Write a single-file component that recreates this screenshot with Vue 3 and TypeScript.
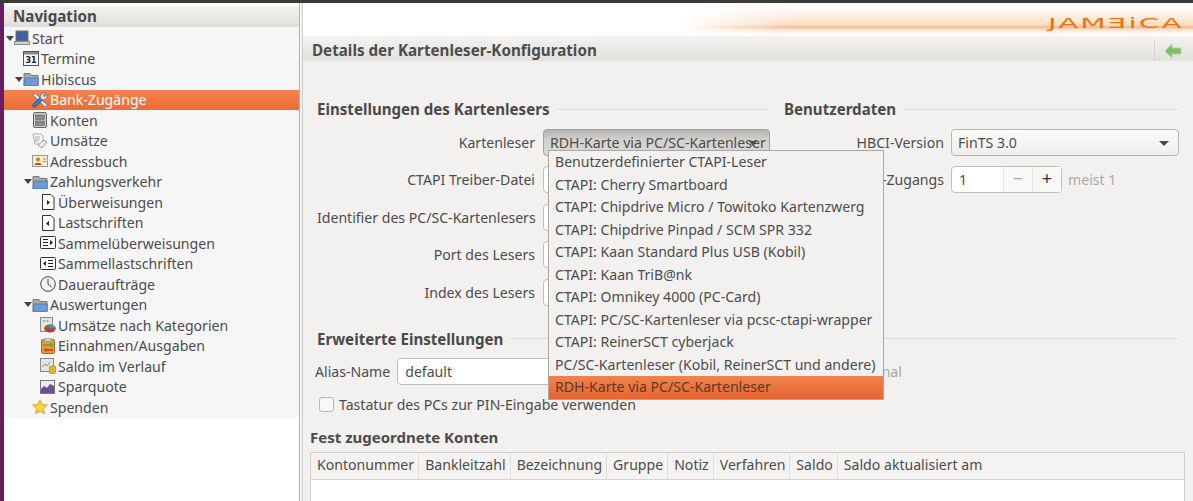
<script setup lang="ts">
interface NavItem { label: string; depth: number; icon: string; arrow?: boolean; selected?: boolean }
const nav: NavItem[] = [
  { label: 'Start', depth: 0, icon: 'monitor', arrow: true },
  { label: 'Termine', depth: 1, icon: 'cal' },
  { label: 'Hibiscus', depth: 1, icon: 'folder', arrow: true },
  { label: 'Bank-Zugänge', depth: 2, icon: 'tools', selected: true },
  { label: 'Konten', depth: 2, icon: 'safe' },
  { label: 'Umsätze', depth: 2, icon: 'docs' },
  { label: 'Adressbuch', depth: 2, icon: 'card' },
  { label: 'Zahlungsverkehr', depth: 2, icon: 'folder', arrow: true },
  { label: 'Überweisungen', depth: 3, icon: 'docR' },
  { label: 'Lastschriften', depth: 3, icon: 'docL' },
  { label: 'Sammelüberweisungen', depth: 3, icon: 'multiR' },
  { label: 'Sammellastschriften', depth: 3, icon: 'multiL' },
  { label: 'Daueraufträge', depth: 3, icon: 'clock' },
  { label: 'Auswertungen', depth: 2, icon: 'folder', arrow: true },
  { label: 'Umsätze nach Kategorien', depth: 3, icon: 'pie' },
  { label: 'Einnahmen/Ausgaben', depth: 3, icon: 'inout' },
  { label: 'Saldo im Verlauf', depth: 3, icon: 'coins' },
  { label: 'Sparquote', depth: 3, icon: 'chart' },
  { label: 'Spenden', depth: 2, icon: 'star' },
]
const popup = [
  'Benutzerdefinierter CTAPI-Leser',
  'CTAPI: Cherry Smartboard',
  'CTAPI: Chipdrive Micro / Towitoko Kartenzwerg',
  'CTAPI: Chipdrive Pinpad / SCM SPR 332',
  'CTAPI: Kaan Standard Plus USB (Kobil)',
  'CTAPI: Kaan TriB@nk',
  'CTAPI: Omnikey 4000 (PC-Card)',
  'CTAPI: PC/SC-Kartenleser via pcsc-ctapi-wrapper',
  'CTAPI: ReinerSCT cyberjack',
  'PC/SC-Kartenleser (Kobil, ReinerSCT und andere)',
  'RDH-Karte via PC/SC-Kartenleser',
]
const leftRows = [
  { label: 'CTAPI Treiber-Datei' },
  { label: 'Identifier des PC/SC-Kartenlesers' },
  { label: 'Port des Lesers' },
  { label: 'Index des Lesers' },
]
const cols = ['Kontonummer', 'Bankleitzahl', 'Bezeichnung', 'Gruppe', 'Notiz', 'Verfahren', 'Saldo', 'Saldo aktualisiert am']
</script>

<template>
  <div class="root">
    <div class="topbar"></div>
    <div class="main">
      <div class="launcher"></div>
      <aside class="side">
        <div class="nav-head">Navigation</div>
        <ul class="tree">
          <li v-for="n in nav" :key="n.label" class="node" :class="[`d${n.depth}`, { sel: n.selected }]">
            <span class="arrow" :class="{ on: n.arrow }"></span>
            <svg class="ico" viewBox="0 0 16 16">
              <template v-if="n.icon === 'monitor'">
                <rect x="2" y="1" width="12" height="10" fill="#4a5a78" stroke="#777"/>
                <rect x="3.500" y="2.500" width="9" height="7" fill="#3c64a8"/>
                <rect x="0.500" y="11.500" width="15" height="3" fill="#d4d4d4" stroke="#888"/>
              </template>
              <template v-else-if="n.icon === 'cal'">
                <rect x="0.500" y="0.500" width="15" height="14" fill="#f4f4f0" stroke="#555"/>
                <rect x="1" y="1" width="14" height="2.500" fill="#888"/>
                <text x="8" y="12" text-anchor="middle" class="cal-t">31</text>
              </template>
              <template v-else-if="n.icon === 'folder'">
                <path d="M1 14V2.500h6l1.500 2H15V14z" fill="#a8a8a8" stroke="#777"/>
                <path d="M0.800 14.500L2.500 7h12.800v7.500z" fill="#6d9bd6" stroke="#4a76ad" stroke-width=".8"/>
              </template>
              <template v-else-if="n.icon === 'tools'">
                <path d="M3 3l10.500 10.500" stroke="#777" stroke-width="3.400" stroke-linecap="round"/>
                <path d="M3 3l10.500 10.500" stroke="#f2f2f2" stroke-width="2" stroke-linecap="round"/>
                <path d="M2.500 13.500l6-6" stroke="#1e4f94" stroke-width="4" stroke-linecap="round"/>
                <path d="M2.500 13.500l6-6" stroke="#3a7ed0" stroke-width="2.600" stroke-linecap="round"/>
                <path d="M8.500 6a3.800 3.800 0 0 1 5-4.800l-2.300 2.300 1.300 1.300 2.300-2.300a3.800 3.800 0 0 1-5 5z" fill="#e2e2e2" stroke="#666" stroke-width=".7"/>
              </template>
              <template v-else-if="n.icon === 'safe'">
                <rect x="1.500" y="0.500" width="13" height="15" rx="1.500" fill="#cfcfcf" stroke="#666"/>
                <rect x="3.500" y="3" width="9" height="4.500" fill="#8a8a8a" stroke="#555" stroke-width=".5"/>
                <rect x="3.500" y="9" width="9" height="4.500" fill="#8a8a8a" stroke="#555" stroke-width=".5"/>
              </template>
              <template v-else-if="n.icon === 'docs'">
                <path d="M1 1h8l2 2v8H3z" fill="#fafafa" stroke="#aaa"/>
                <path d="M3 4h5M3 6h5M3 8h4" stroke="#999" stroke-width=".8"/>
                <path d="M6 12l6-5 3 2-5 6z" fill="#eee" stroke="#999"/>
              </template>
              <template v-else-if="n.icon === 'card'">
                <rect x="0.500" y="2.500" width="15" height="11" fill="#f4efcf" stroke="#999"/>
                <circle cx="6" cy="6.500" r="2" fill="#c97a1c"/>
                <path d="M2.500 12c0-3 7-3 7 0z" fill="#b5561c"/>
                <path d="M11 6h3M11 8.500h3" stroke="#777" stroke-width=".8"/>
              </template>
              <template v-else-if="n.icon === 'docR' || n.icon === 'docL'">
                <path d="M2.500 .5h8.500l3 3v12h-11.500z" fill="#fff" stroke="#333"/>
                <path v-if="n.icon === 'docR'" d="M7 6v5l3-2.500z" fill="#222"/>
                <path v-else d="M9 6v5l-3-2.500z" fill="#222"/>
              </template>
              <template v-else-if="n.icon === 'multiR'">
                <rect x=".5" y="1.500" width="15" height="12" rx="1" fill="#fff" stroke="#333"/>
                <path d="M3 4.500h5M3 7.500h5M3 10.500h5" stroke="#222"/>
                <path d="M10 5v5l3-2.500z" fill="#222"/>
              </template>
              <template v-else-if="n.icon === 'multiL'">
                <rect x=".5" y="1.500" width="15" height="12" rx="1" fill="#fff" stroke="#333"/>
                <path d="M8 4.500h5M8 7.500h5M8 10.500h5" stroke="#222"/>
                <path d="M6 5v5l-3-2.500z" fill="#222"/>
              </template>
              <template v-else-if="n.icon === 'clock'">
                <circle cx="8" cy="8" r="7.300" fill="#f2f2f2" stroke="#444"/>
                <path d="M8 3v5l3.500 3" fill="none" stroke="#444"/>
              </template>
              <template v-else-if="n.icon === 'pie'">
                <rect x=".5" y=".5" width="12" height="14" fill="#e4e4e4" stroke="#888"/>
                <path d="M3 3h2v2h-2zM6.500 3h2v2h-2z" fill="#aaa"/>
                <ellipse cx="10" cy="11.500" rx="5.800" ry="4" fill="#c73a28"/>
                <path d="M10 11.500L10 7.500a5.800 4 0 0 1 5.800 4z" fill="#3f9ac9"/>
                <path d="M4.500 10a5.800 4 0 0 1 5.500-2.500v4z" fill="#5a8f3c"/>
              </template>
              <template v-else-if="n.icon === 'inout'">
                <rect x="1.500" y="1.500" width="13" height="14" rx="1.500" fill="#e89a3c" stroke="#b06a1e"/>
                <rect x="4.500" y=".5" width="7" height="3" fill="#cccccc" stroke="#888" stroke-width=".5"/>
                <path d="M3 6h7V4l4 3-4 3V8H3z" fill="#6aa83a"/>
                <path d="M13 11H7V9.500L3 12l4 2.500V13h6z" fill="#d2501e"/>
              </template>
              <template v-else-if="n.icon === 'coins'">
                <rect x=".5" y=".5" width="13" height="13" fill="#e4e4e4" stroke="#888"/>
                <path d="M2.500 9l2.500-3 2 2 3-4" fill="none" stroke="#6f8fb8"/>
                <rect x="9.500" y="8" width="6" height="7.500" rx="1" fill="#e0b52a" stroke="#a8841a" stroke-width=".6"/>
              </template>
              <template v-else-if="n.icon === 'chart'">
                <rect x=".5" y="1.500" width="14" height="13" fill="#ececec" stroke="#777"/>
                <path d="M1 14V10l3-3 3 2 3-4 4 2v7z" fill="#6b4f8f"/>
              </template>
              <template v-else>
                <path d="M8 .8l2.200 4.700 5.100.6-3.800 3.500 1 5.100L8 12.200 3.500 14.700l1-5.100L.7 6.100l5.100-.6z" fill="#f7d24a" stroke="#d99a1e" stroke-width=".9"/>
              </template>
            </svg>
            <span class="lbl">{{ n.label }}</span>
          </li>
        </ul>
        <div class="side-rest"></div>
      </aside>
      <section class="content">
        <div class="banner">
          <div class="logo">JAMƎiCA</div>
        </div>
        <div class="detail-head">
          <span>Details der Kartenleser-Konfiguration</span>
          <span class="back">
            <svg width="18" height="16" viewBox="0 0 18 16"><path d="M1 8l7-7v4h9v6H8v4z" fill="#7cc264" stroke="#a8d898"/></svg>
          </span>
        </div>
        <div class="body">
          <div class="cols">
            <div class="col left">
              <h3 class="group"><span>Einstellungen des Kartenlesers</span><i></i></h3>
              <div class="frow">
                <label>Kartenleser</label>
                <div class="combo pressed">RDH-Karte via PC/SC-Kartenleser<b class="tri"></b></div>
              </div>
              <div v-for="r in leftRows" :key="r.label" class="frow">
                <label>{{ r.label }}</label>
                <div class="input"></div>
              </div>
            </div>
            <div class="col right">
              <h3 class="group"><span>Benutzerdaten</span><i></i></h3>
              <div class="frow">
                <label>HBCI-Version</label>
                <div class="combo wide">FinTS 3.0<b class="tri"></b></div>
              </div>
              <div class="frow">
                <label>Index des Bank-Zugangs</label>
                <div class="spin">
                  <span class="val">1</span>
                  <span class="btn dim">−</span>
                  <span class="btn">+</span>
                </div>
                <span class="hint">meist 1</span>
              </div>
            </div>
          </div>
          <h3 class="group ext"><span>Erweiterte Einstellungen</span><i></i></h3>
          <div class="alias">
            <label>Alias-Name</label>
            <div class="input alias-in">default</div>
            <span class="hint opt">optional</span>
          </div>
          <label class="check"><span class="box"></span>Tastatur des PCs zur PIN-Eingabe verwenden</label>
          <h3 class="fest">Fest zugeordnete Konten</h3>
          <div class="table">
            <div class="thead">
              <div v-for="c in cols" :key="c" class="th">{{ c }}</div>
            </div>
          </div>
        </div>
        <ul class="popup">
          <li v-for="p in popup" :key="p" :class="{ active: p.startsWith('RDH') }">{{ p }}</li>
        </ul>
      </section>
    </div>
  </div>
</template>

<style>
html, body { margin: 0; padding: 0; background: #fff; }
</style>

<style scoped>
.root { width: 1193px; height: 501px; overflow: hidden; display: flex; flex-direction: column; font-family: "Noto Sans", "Open Sans", sans-serif; font-size: 14.1px; color: #4c4c4c; background: #f2f1f0; }
.topbar { height: 3px; background: #3c3b37; flex: none; }
.main { flex: 1; display: flex; min-height: 0; }
.launcher { width: 4px; background: #6b1a63; flex: none; }
.side { width: 296px; flex: none; display: flex; flex-direction: column; background: #fff; border-right: 1px solid #b8b6b2; box-sizing: border-box; }
.nav-head { height: 21px; line-height: 21px; padding-left: 9px; margin-top: 3px; font-weight: 700; font-size: 15.2px; background: linear-gradient(#f3f2f0, #e0ded9); color: #4a4a4a; }
.tree { list-style: none; margin: 0; padding: 1px 0 0; background: #f6f6f6; }
.node { height: 20.5px; display: flex; align-items: center; white-space: nowrap; }
.d0 { padding-left: 1px; }
.d1 { padding-left: 10px; }
.d2 { padding-left: 19px; }
.d3 { padding-left: 27px; }
.node.sel { background: linear-gradient(#f58250, #ec6c34); color: #fff; }
.arrow { width: 9px; height: 9px; flex: none; position: relative; }
.arrow.on::before { content: ""; position: absolute; left: 1px; top: 2px; border-left: 4px solid transparent; border-right: 4px solid transparent; border-top: 5px solid #444; }
.ico { width: 16px; height: 16px; flex: none; }
.cal-t { font: 700 8px "DejaVu Sans", sans-serif; fill: #222; }
.lbl { margin-left: 2px; }
.side-rest { flex: 1; background: #fff; }
.content { flex: 1; min-width: 0; position: relative; display: flex; flex-direction: column; margin-left: 2px; border-left: 1px solid #d4d2ce; }
.banner { height: 33px; flex: none; position: relative; background: linear-gradient(180deg, #fff 0, #fff 2px, #fde9d8 16px, #fbdcc2 22px, #f7b88a 24px, #fce6d4 27px, #fff 32px); }
.banner::before { content: ""; position: absolute; inset: 0 auto 0 0; width: 490px; background: linear-gradient(90deg, #fff 380px, rgba(255,255,255,0)); }
.logo { position: absolute; right: 9px; top: 10px; color: #e8760f; font-size: 14px; letter-spacing: 1px; font-family: "DejaVu Sans", sans-serif; line-height: 20px; transform: scaleX(2.1); transform-origin: right; white-space: nowrap; }
.detail-head { height: 21px; flex: none; margin-top: 4px; display: flex; align-items: center; justify-content: space-between; padding: 0 0 0 9px; font-weight: 700; font-size: 15.2px; background: linear-gradient(#f1f0ee, #e2e0dc); }
.detail-head > span:first-child { margin-top: -2px; }
.back { width: 39px; height: 21px; border-left: 1px solid #d4d2ce; display: flex; align-items: center; justify-content: center; box-sizing: border-box; padding-right: 3px; }
.body { flex: 1; padding: 0 8px 0 7px; min-height: 0; }
.cols { display: flex; padding-top: 38px; padding-right: 6px; }
.col.left { width: 474px; flex: none; padding-left: 7px; box-sizing: border-box; }
.col.right { flex: 1; min-width: 0; }
.group { display: flex; align-items: center; gap: 8px; margin: 0; height: 20px; font-size: 15.1px; font-weight: 700; color: #4a4a4a; }
.group i { flex: 1; height: 1px; background: #dedcd8; }
.left .group i { margin-right: 16px; }
.right .group i { margin-right: 2px; }
.frow { display: flex; align-items: center; height: 27px; margin-top: 9.5px; }
.frow + .frow { margin-top: 10.6px; }
.left .frow label { width: 226px; text-align: right; padding-right: 8px; box-sizing: border-box; white-space: nowrap; flex: none; }
.right .frow label { width: 167px; text-align: right; padding-right: 7px; box-sizing: border-box; white-space: nowrap; flex: none; direction: rtl; }
.combo { box-sizing: border-box; height: 27px; width: 227px; border: 1px solid #b8b6b0; border-radius: 4px; padding: 0 6px; line-height: 25px; position: relative; white-space: nowrap; background: linear-gradient(#fbfbfa, #efeeec); }
.combo.pressed { background: linear-gradient(#b4b2ae, #d4d2ce 40%, #dad8d4); border-color: #a4a29e; }
.combo.wide { flex: 1; }
.tri { position: absolute; right: 9px; top: 11px; border-left: 5px solid transparent; border-right: 5px solid transparent; border-top: 5px solid #4c4c4c; }
.pressed .tri { right: 12px; border-left-width: 4px; border-right-width: 4px; }
.input { box-sizing: border-box; height: 27px; width: 227px; border: 1px solid #c0beb9; border-radius: 4px; background: #fff; padding: 0 7px; line-height: 25px; }
.spin { box-sizing: border-box; height: 27px; width: 111px; border: 1px solid #c0beb9; border-radius: 4px; display: flex; background: #fff; flex: none; align-items: stretch; }
.val { flex: 1; padding-left: 7px; line-height: 25px; }
.btn { width: 28px; text-align: center; line-height: 23px; font-size: 18px; border-left: 1px solid #e4e2de; color: #333; background: #f8f8f7; }
.btn.dim { color: #a8a8a8; }
.hint { margin-left: 6px; color: #aaa9a5; white-space: nowrap; }
.ext { margin-top: 23px; padding-left: 7px; padding-right: 8px; }
.alias { display: flex; align-items: center; margin-top: 9px; padding-left: 5px; }
.alias label { margin-right: 7px; }
.alias-in { width: 443px; flex: none; }
.opt { margin-left: 7px; }
.check { display: flex; align-items: center; gap: 5px; margin-top: 10px; padding-left: 9px; height: 20px; }
.box { width: 15px; height: 15px; box-sizing: border-box; border: 1px solid #b8b6b0; border-radius: 3px; background: #f8f8f7; }
.fest { margin: 12px 0 0; font-size: 15px; font-weight: 700; height: 20px; line-height: 20px; }
.table { margin-top: 5px; background: #fff; border: 1px solid #d0ceca; height: 80px; }
.thead { display: flex; height: 26px; background: #f4f3f2; border-bottom: 1px solid #d4d2ce; }
.th { padding: 0 4px 0 6px; line-height: 24px; border-right: 1px solid #e0deda; white-space: nowrap; }
.th:last-child { border-right: 0; }
.popup { position: absolute; left: 245px; top: 147px; list-style: none; margin: 0; padding: 0; width: 334px; background: #f2f1f0; border: 1px solid #a9a7a3; box-sizing: content-box; }
.popup li { height: 22.5px; line-height: 21.5px; padding-left: 6px; white-space: nowrap; }
.popup li.active { background: linear-gradient(#f2824c, #e4652f); color: #5a3a28; }
</style>
